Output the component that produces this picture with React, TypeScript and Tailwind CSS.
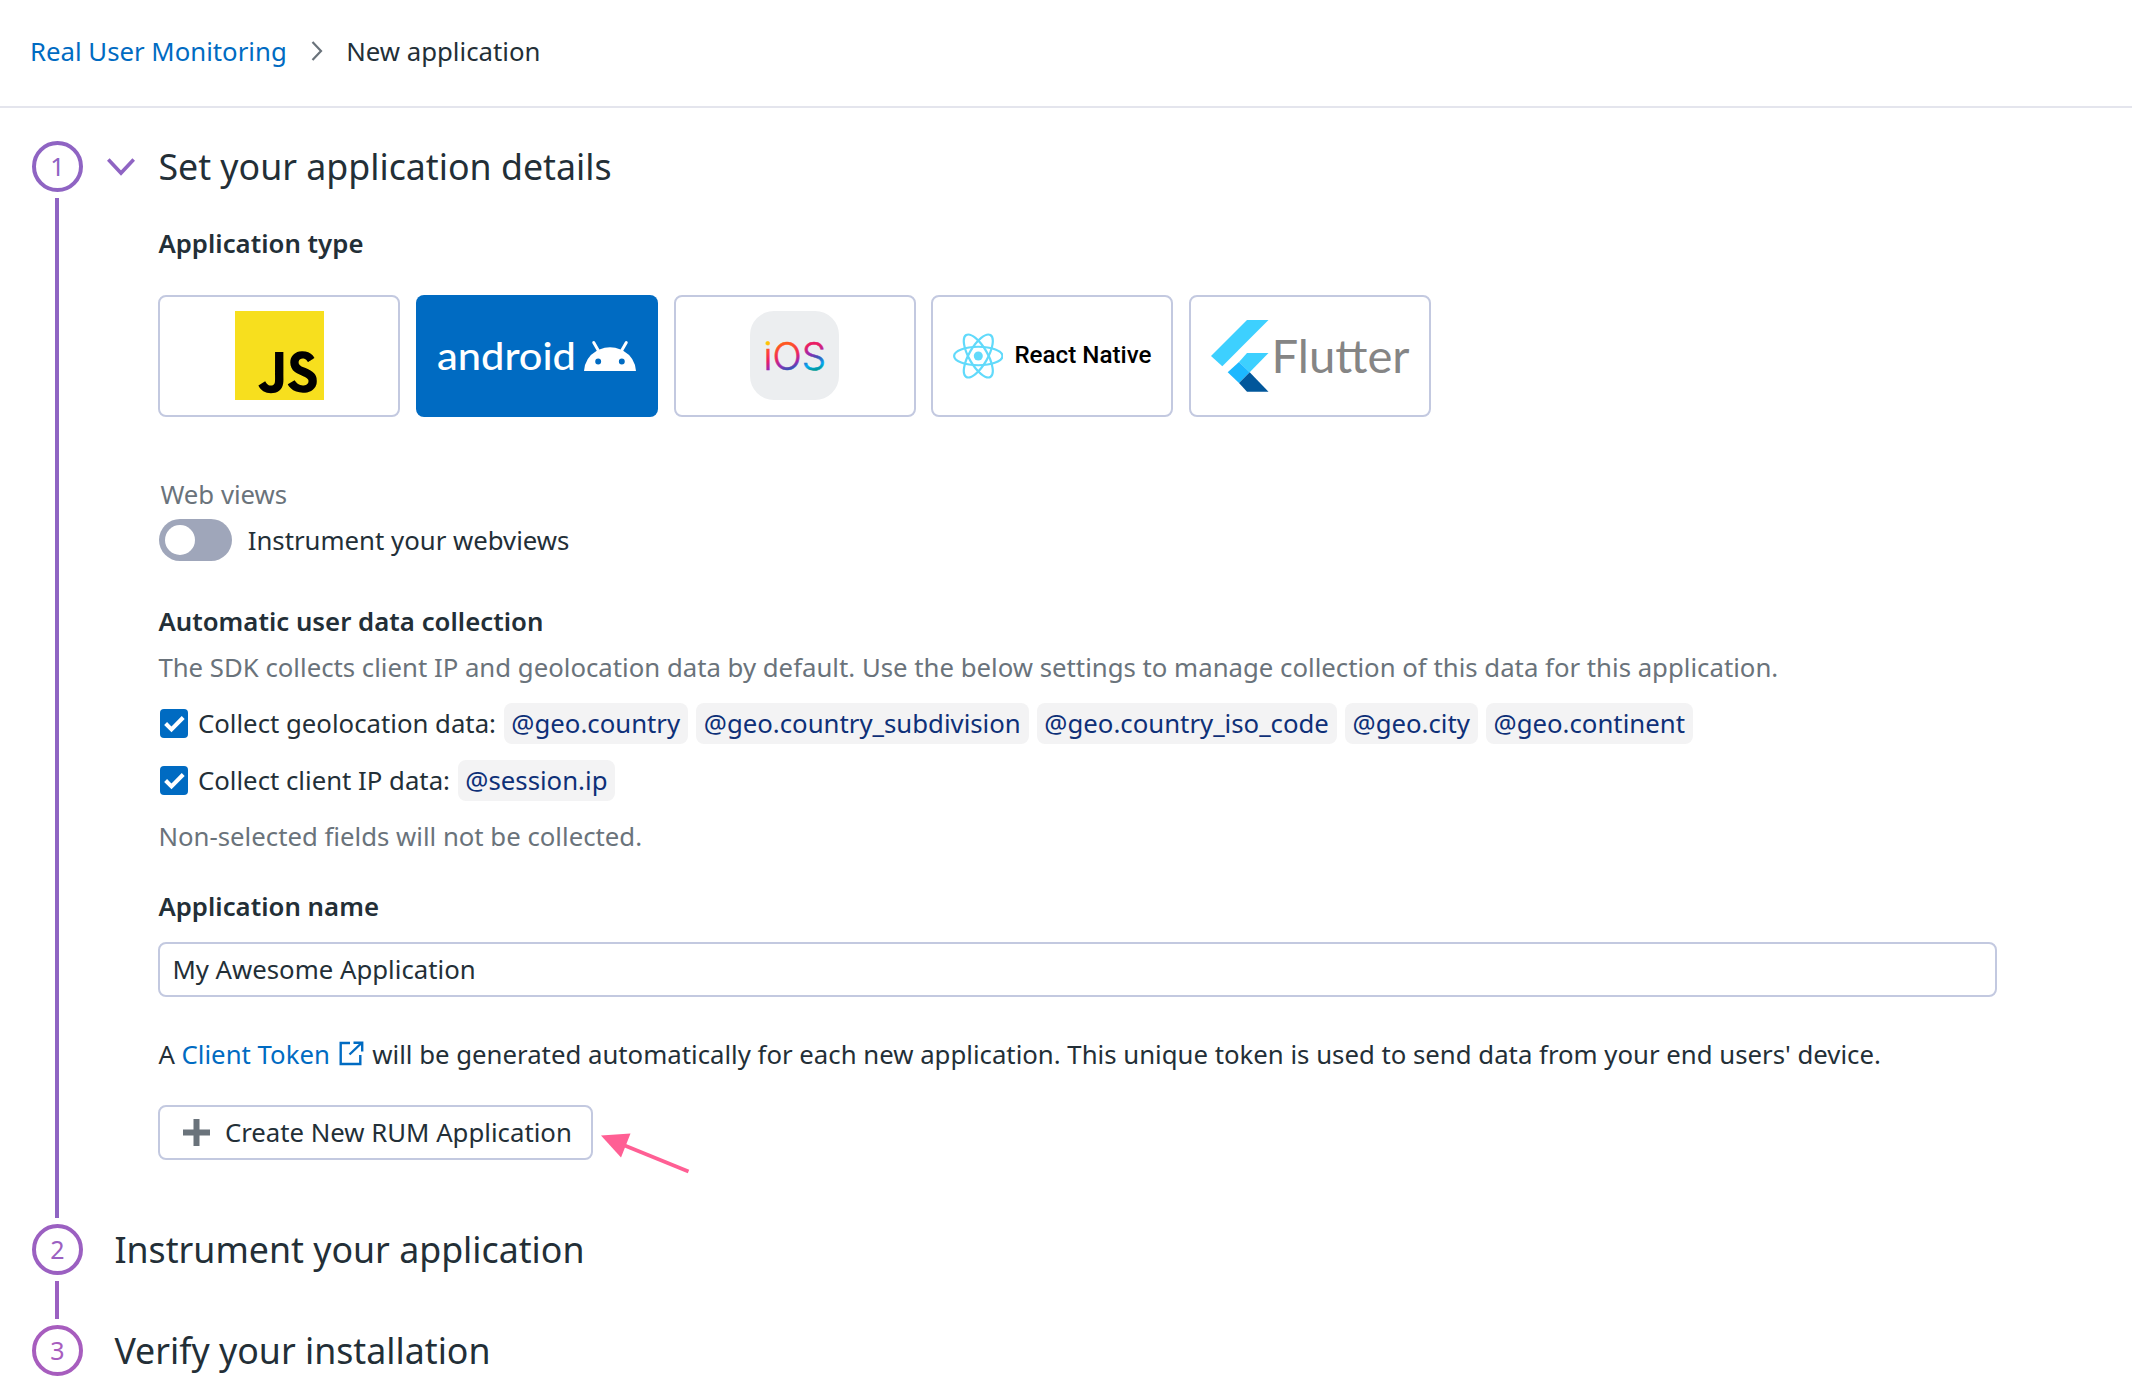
import type { ReactNode } from "react";
import { SiJavascript } from "react-icons/si";
import { MdAndroid } from "react-icons/md";

function StepRail({ n, color, line }: { n: number; color: string; line?: boolean }) {
  return (
    <div className="flex w-[51px] shrink-0 flex-col items-center" style={{ color }}>
      <div className="flex size-[51px] shrink-0 items-center justify-center rounded-full border-4 border-current text-[25px] leading-none">
        {n}
      </div>
      {line && <div className="my-1.5 w-1 flex-1 bg-current" />}
    </div>
  );
}

function Card({ children, selected }: { children: ReactNode; selected?: boolean }) {
  return (
    <button
      className={
        selected
          ? "flex h-[122px] w-[242px] items-center justify-center rounded-lg bg-[#006bc2]"
          : "flex h-[122px] w-[242px] items-center justify-center rounded-lg border-2 border-[#c3c9e0] bg-white"
      }
    >
      {children}
    </button>
  );
}

function Chip({ children }: { children: ReactNode }) {
  return (
    <span className="flex h-[41px] items-center rounded-lg bg-[#f3f3f4] px-[7.8px] pb-[2px] whitespace-nowrap text-[#0e3078]">
      {children}
    </span>
  );
}

function Checkbox() {
  return (
    <span className="mr-[9.5px] ml-[1.6px] flex size-[28.5px] items-center justify-center rounded-[4px] bg-[#006bc2]">
      <svg viewBox="0 0 28 28" className="size-full" fill="none" stroke="white" strokeWidth="4">
        <path d="M5.5 14.2 11.3 20 22.8 8.3" />
      </svg>
    </span>
  );
}

function IosLogo() {
  return (
    <svg width="89" height="89" viewBox="0 0 89 89" className="mb-px">
      <defs>
        <linearGradient id="ios-i" gradientUnits="userSpaceOnUse" x1="0" y1="30" x2="0" y2="59">
          <stop offset="0.12" stopColor="#ffc107" />
          <stop offset="0.2" stopColor="#ff5722" />
          <stop offset="0.45" stopColor="#ff3d3d" />
          <stop offset="0.7" stopColor="#e91e63" />
          <stop offset="1" stopColor="#9c27b0" />
        </linearGradient>
        <linearGradient id="ios-o" gradientUnits="userSpaceOnUse" x1="32" y1="30" x2="40" y2="60">
          <stop offset="0.15" stopColor="#ff5722" />
          <stop offset="0.5" stopColor="#f0245c" />
          <stop offset="0.75" stopColor="#9c27b0" />
          <stop offset="0.92" stopColor="#3f51b5" />
        </linearGradient>
        <linearGradient id="ios-s" gradientUnits="userSpaceOnUse" x1="62" y1="30" x2="68" y2="60">
          <stop offset="0.15" stopColor="#e91e63" />
          <stop offset="0.4" stopColor="#9c27b0" />
          <stop offset="0.55" stopColor="#3f51b5" />
          <stop offset="0.78" stopColor="#03a9f4" />
          <stop offset="0.98" stopColor="#009688" />
        </linearGradient>
      </defs>
      <rect width="89" height="89" rx="24" fill="#eceef0" />
      <text x="13.5" y="58.5" fontSize="38.5" fontWeight="300" fontFamily="Inter, sans-serif" strokeWidth="0.5" textLength="62.5" lengthAdjust="spacingAndGlyphs">
        <tspan fill="url(#ios-i)" stroke="url(#ios-i)">i</tspan>
        <tspan fill="url(#ios-o)" stroke="url(#ios-o)">O</tspan>
        <tspan fill="url(#ios-s)" stroke="url(#ios-s)">S</tspan>
      </text>
    </svg>
  );
}

function ReactAtom() {
  return (
    <svg width="50.6" height="46" viewBox="-11.5 -10.23 23 20.46" fill="none" stroke="#61dafb">
      <circle r="2.05" fill="#61dafb" stroke="none" />
      <ellipse rx="11" ry="4.2" />
      <ellipse rx="11" ry="4.2" transform="rotate(60)" />
      <ellipse rx="11" ry="4.2" transform="rotate(120)" />
    </svg>
  );
}

function FlutterLogo() {
  return (
    <svg width="199" height="72" viewBox="0 0 199 72" className="ml-px overflow-visible">
      <path d="M36 0H57.5L11.3 46.3 0 36Z" fill="#3dd0ff" />
      <path d="M36 33H57.5L38.7 52.3 28 42Z" fill="#3dd0ff" />
      <path d="M28 42 38.7 52.3 28 63 16.7 52.3Z" fill="#1cb8ff" />
      <path d="M38.7 52.3 57.5 71.7H36L28 63Z" fill="#01579b" />
      <text x="60.5" y="52.7" fontSize="46" fontFamily="Lato, sans-serif" fill="#858585" textLength="138" lengthAdjust="spacingAndGlyphs">
        Flutter
      </text>
    </svg>
  );
}

export default function App() {
  return (
    <div className="min-h-[1396px] w-[2132px] overflow-hidden bg-white font-['Noto_Sans',sans-serif] text-[25.75px] leading-[36px] text-[#232f37]">
      <header className="flex h-[108px] items-center border-b-2 border-[#e4e5ed] pb-1 pl-[30px]">
        <a className="whitespace-nowrap text-[#006bc2]">Real User Monitoring</a>
        <svg width="12" height="20" viewBox="0 0 12 20" className="mr-[23.5px] ml-[24px]" fill="none" stroke="#6a737b" strokeWidth="2.2">
          <path d="M1.5 1 10 10 1.5 19" />
        </svg>
        <span className="whitespace-nowrap">New application</span>
      </header>

      <main className="pt-[33px] pl-[31.9px]">
        <section className="flex h-[1083px]">
          <StepRail n={1} color="#8f64c3" line />
          <div className="ml-[24px] flex-1">
            <div className="flex h-[51px] items-center">
              <svg width="28" height="18" viewBox="0 0 28 18" fill="none" stroke="#8f64c3" strokeWidth="3.6">
                <path d="M1.3 1.5 14 15 26.7 1.5" />
              </svg>
              <h1 className="ml-[23.5px] text-[35.72px] leading-[49px]">Set your application details</h1>
            </div>
            <div className="ml-[51.5px]">
              <h2 className="mt-[33px] font-semibold tracking-[0.03px]">Application type</h2>
              <div className="mt-[34px] flex gap-[15.6px]">
                <Card>
                  <span className="mb-px flex size-[89px] bg-black">
                    <SiJavascript className="size-full text-[#f7df1e]" />
                  </span>
                </Card>
                <Card selected>
                  <svg width="139" height="60" viewBox="0 0 139 60" className="overflow-visible">
                    <text x="0" y="44.2" fontSize="39" fontWeight="500" fontFamily="Lato, sans-serif" fill="white" textLength="139" lengthAdjust="spacingAndGlyphs">
                      android
                    </text>
                  </svg>
                  <MdAndroid viewBox="1 5.36 22 12.64" className="ml-[8px] h-[30px] w-[52px] text-white" />
                </Card>
                <Card>
                  <IosLogo />
                </Card>
                <Card>
                  <ReactAtom />
                  <span className="ml-[11px] pb-[2px] font-['Roboto',sans-serif] text-[24.2px] font-medium whitespace-nowrap text-black">
                    React Native
                  </span>
                </Card>
                <Card>
                  <FlutterLogo />
                </Card>
              </div>

              <div className="mt-[59px] ml-[2px] text-[#6a737b]">Web views</div>
              <div className="mt-[7px] flex h-[42px] items-center">
                <span className="ml-[0.3px] flex h-[42px] w-[73px] items-center rounded-full bg-[#9fa6ba] pl-[6px]">
                  <span className="size-[30px] rounded-full bg-white" />
                </span>
                <span className="ml-[16px]">Instrument your webviews</span>
              </div>

              <h2 className="mt-[42px] font-semibold tracking-[0.03px]">Automatic user data collection</h2>
              <p className="mt-[10px] whitespace-nowrap text-[#6a737b]">
                The SDK collects client IP and geolocation data by default. Use the below settings to manage collection of this data for this application.
              </p>
              <div className="mt-[18px] flex h-[41px] items-center">
                <Checkbox />
                <span className="mr-[7.5px] pb-[2px]">Collect geolocation data:</span>
                <div className="flex gap-[8px]">
                  <Chip>@geo.country</Chip>
                  <Chip>@geo.country_subdivision</Chip>
                  <Chip>@geo.country_iso_code</Chip>
                  <Chip>@geo.city</Chip>
                  <Chip>@geo.continent</Chip>
                </div>
              </div>
              <div className="mt-[16px] flex h-[41px] items-center">
                <Checkbox />
                <span className="mr-[7.5px] pb-[2px]">Collect client IP data:</span>
                <Chip>@session.ip</Chip>
              </div>
              <p className="mt-[17px] text-[#6a737b]">Non-selected fields will not be collected.</p>

              <h2 className="mt-[34px] font-semibold tracking-[0.03px]">Application name</h2>
              <div className="mt-[18px] flex h-[55px] w-[1839px] items-center rounded-lg border-2 border-[#c3c9e0] pb-px pl-[12px]">
                My Awesome Application
              </div>

              <p className="mt-[38.5px] flex items-center whitespace-pre">
                <span>A </span>
                <a className="text-[#006bc2]">Client Token</a>
                <svg width="25" height="25" viewBox="0 0 25 25" className="mr-[8px] ml-[9.5px]" fill="none" stroke="#006bc2" strokeWidth="2.4">
                  <path d="M11 2H1.7V23H21.3V14" />
                  <path d="M10.5 13.5 22 2.5" />
                  <path d="M14.5 1.8H23.2V10.5" />
                </svg>
                <span>will be generated automatically for each new application. This unique token is used to send data from your end users' device.</span>
              </p>

              <div className="mt-[33.5px] flex">
                <button className="flex h-[55px] w-[434.5px] items-center rounded-lg border-2 border-[#c3c9e0] pb-px pl-[22.5px] whitespace-nowrap">
                  <svg width="27" height="27" viewBox="0 0 27 27" fill="#6a737b">
                    <path d="M10.5 0h6v10.5H27v6H16.5V27h-6V16.5H0v-6h10.5z" />
                  </svg>
                  <span className="ml-[15px]">Create New RUM Application</span>
                </button>
                <svg width="90" height="42" viewBox="0 0 90 42" className="mt-[28px] ml-[8.5px]">
                  <path d="M0 2.5 29.5 0.5 20 24.5Z" fill="#ff5f94" />
                  <path d="M20 11 87.5 38.5" stroke="#ff5f94" strokeWidth="3.8" />
                </svg>
              </div>
            </div>
          </div>
        </section>

        <section className="flex h-[101px]">
          <StepRail n={2} color="#9b60c1" line />
          <h1 className="mt-px ml-[31.5px] text-[35.72px] leading-[49px]">Instrument your application</h1>
        </section>

        <section className="flex">
          <StepRail n={3} color="#a75dbe" />
          <h1 className="mt-px ml-[31.5px] text-[35.72px] leading-[49px]">Verify your installation</h1>
        </section>
      </main>
    </div>
  );
}
